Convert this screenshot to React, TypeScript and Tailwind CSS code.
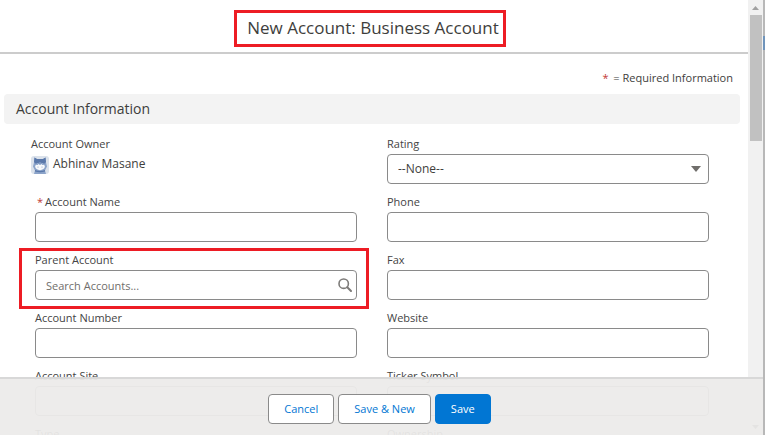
import { useId, type ReactNode } from "react";

const CONTROL = 'block w-full h-[30px] rounded border border-[#8a8a8a] bg-white px-2.5 text-[#3e3e3c] outline-none placeholder:text-[#706e6b]';
const BUTTON = 'h-[30px] rounded border px-[15px] text-[11px]';

interface FieldProps {
  label: string;
  required?: boolean;
  highlighted?: boolean;
  children?: (id: string) => ReactNode;
}

function Field({ label, required, highlighted, children }: FieldProps) {
  const id = useId();
  return (
    <div className="relative h-[58px] pl-1">
      {highlighted && <div className="pointer-events-none absolute -inset-x-3 -top-1 h-[61px] border-3 border-[#ed1c24]" />}
      <label htmlFor={id} className="block h-[18px] text-[11px] leading-4 text-[#444]">
        {required && <span className="mx-0.5 text-[#c23934]">*</span>}
        {label}
      </label>
      {children ? children(id) : <input id={id} type="text" className={`${CONTROL} text-[11px]`} />}
    </div>
  );
}

function Avatar() {
  return (
    <svg viewBox="0 0 18 18" className="mt-0.5 h-[18px] w-[18px] shrink-0" aria-hidden="true">
      <rect width="18" height="18" rx="3" fill="#dbe2eb" />
      <path d="M3.500 1.500L6 3h6l2.500-1.500.5 5 1 4-2 4 1 3.500H3l1-3.500-2-4 1-4z" fill="#8ba3c9" />
      <path d="M3.500 1.500L6 3h6l2.500-1.500.5 4.500-1.500 1.500h-9L3 6z" fill="#5a78aa" />
      <ellipse cx="9" cy="10.500" rx="4.800" ry="3.700" fill="#f7f9fb" />
      <path d="M4.500 8.500Q9 5 13.500 8.500l-2 .5-1-1-1.500 1-1.500-1-1 1z" fill="#7e9ac4" />
      <circle cx="7" cy="11" r=".6" fill="#8ba3c9" />
      <circle cx="11" cy="11" r=".6" fill="#8ba3c9" />
      <path d="M4 14q5 2 10 0v1.500q-5 1.500-10 0z" fill="#5a78aa" />
    </svg>
  );
}

function Scrollbar() {
  return (
    <div className="flex w-[15px] shrink-0 flex-col items-center justify-between bg-[#f1f1f1] py-1.5" aria-hidden="true">
      <div className="flex flex-col items-center gap-[5px]">
        <svg viewBox="0 0 7 4" className="h-1 w-[7px]"><path d="M0 4l3.500-4L7 4z" fill="#a0a0a0" /></svg>
        <div className="h-[126px] w-3 bg-[#c1c1c1]" />
      </div>
      <svg viewBox="0 0 7 4" className="h-1 w-[7px]"><path d="M0 0l3.500 4L7 0z" fill="#505050" /></svg>
    </div>
  );
}

// Sliver of the page that sits behind the dialog
function PageEdge() {
  return (
    <div className="w-[5px] shrink-0 bg-white" aria-hidden="true">
      <div className="h-full w-0.5 bg-[#b8b8b8] pt-9">
        <div className="h-3.5 bg-[#6f94bb]" />
      </div>
    </div>
  );
}

export default function App() {
  return (
    <div className="flex h-screen overflow-hidden bg-white font-['Open_Sans','Noto_Sans',sans-serif] text-[#3e3e3c]">
      <div className="relative flex min-w-0 flex-1">
        <main className="min-w-0 flex-1 overflow-hidden">
          <header className="flex h-[54px] justify-center border-b-2 border-[#cccccc] pr-2 pt-2.5">
            <h1 className="h-[37px] border-3 border-[#ed1c24] pl-2.5 pr-1 text-[17px] leading-[30px]">New Account: Business Account</h1>
          </header>

          <p className="mt-[15px] pr-[15px] text-right text-[11px] leading-[18px]">
            <span className="mr-0.5 text-[#c23934]">*</span> = Required Information
          </p>

          <h2 className="ml-1 mr-2 mt-[7px] h-[30px] rounded bg-[#f3f3f3] pl-3 text-[14px] leading-[30px]">Account Information</h2>

          <form className="grid grid-cols-2 gap-x-[26px] pl-[31px] pr-[39px] pt-3">
            <div className="h-[58px]">
              <div className="h-[18px] text-[11px] leading-4 text-[#444]">Account Owner</div>
              <div className="flex gap-1 text-[12px] leading-5">
                <Avatar />
                Abhinav Masane
              </div>
            </div>
            <Field label="Rating">
              {(id) => (
                <div className="relative">
                  <select id={id} className={`${CONTROL} appearance-none text-[12px]`}>
                    <option>--None--</option>
                  </select>
                  <svg viewBox="0 0 10 6" className="pointer-events-none absolute right-2 top-3 h-1.5 w-2.5"><path d="M0 0h10L5 6z" fill="#706e6b" /></svg>
                </div>
              )}
            </Field>
            <Field label="Account Name" required />
            <Field label="Phone" />
            <Field label="Parent Account" highlighted>
              {(id) => (
                <div className="relative">
                  <input id={id} type="search" placeholder="Search Accounts..." className={`${CONTROL} text-[11px]`} />
                  <svg viewBox="0 0 14 14" className="pointer-events-none absolute right-[5px] top-2 h-3.5 w-3.5" fill="none" stroke="#7d7b79">
                    <circle cx="5.700" cy="5.700" r="4.700" strokeWidth="1.600" />
                    <path d="M9.300 9.300l3.700 3.700" strokeWidth="2" strokeLinecap="round" />
                  </svg>
                </div>
              )}
            </Field>
            <Field label="Fax" />
            <Field label="Account Number" />
            <Field label="Website" />
            <Field label="Account Site" />
            <Field label="Ticker Symbol" />
            <Field label="Type" />
            <Field label="Ownership" />
          </form>
        </main>
        <Scrollbar />

        <footer className="absolute inset-x-0 bottom-0 flex h-[58px] justify-center gap-1 border-t-2 border-[#d8d8d8] bg-[#ecebea]/95 pr-1 pt-[15px]">
          <button type="button" className={`${BUTTON} border-[#8a8a8a] bg-white text-[#0176d3]`}>Cancel</button>
          <button type="button" className={`${BUTTON} border-[#8a8a8a] bg-white text-[#0176d3]`}>Save &amp; New</button>
          <button type="button" className={`${BUTTON} border-[#0176d3] bg-[#0176d3] text-white`}>Save</button>
        </footer>
      </div>
      <PageEdge />
    </div>
  );
}
